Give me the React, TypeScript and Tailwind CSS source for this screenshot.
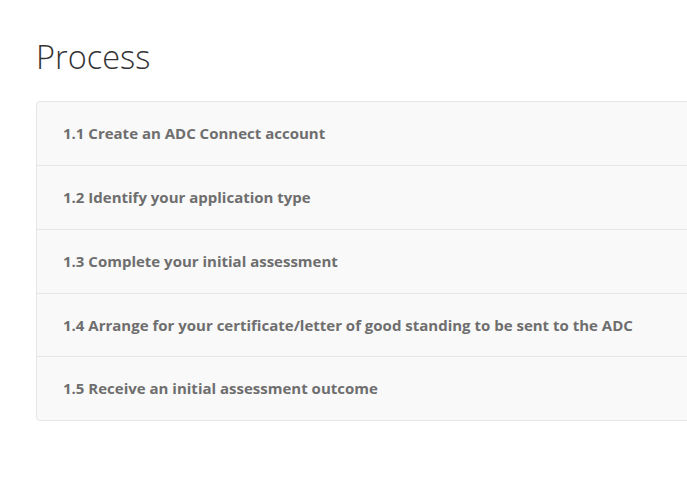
import React from "react";

const items = [
  "1.1 Create an ADC Connect account",
  "1.2 Identify your application type",
  "1.3 Complete your initial assessment",
  "1.4 Arrange for your certificate/letter of good standing to be sent to the ADC",
  "1.5 Receive an initial assessment outcome",
];

const heights = ["h-[64px]", "h-[64px]", "h-[64px]", "h-[63px]", "h-[63px]"];

export default function App() {
  return (
    <div
      className="w-[687px] h-[494px] overflow-hidden bg-white"
      style={{ fontFamily: '"Open Sans", sans-serif' }}
    >
      <div className="pl-[36px] pt-[35px]">
        <h1 className="text-[32.5px] leading-[44px] font-light text-[#333] m-0">Process</h1>
        <div className="mt-[22px] w-[700px] bg-[#f9f9f9] border border-[#e6e6e6] rounded-[4px]">
          {items.map((t, i) => (
            <div
              key={i}
              className={`${heights[i]} flex items-center pl-[26px] text-[15px] font-bold text-[#6e6e6e] ${
                i < items.length - 1 ? "border-b border-[#e6e6e6]" : ""
              }`}
            >
              {t}
            </div>
          ))}
        </div>
      </div>
    </div>
  );
}
